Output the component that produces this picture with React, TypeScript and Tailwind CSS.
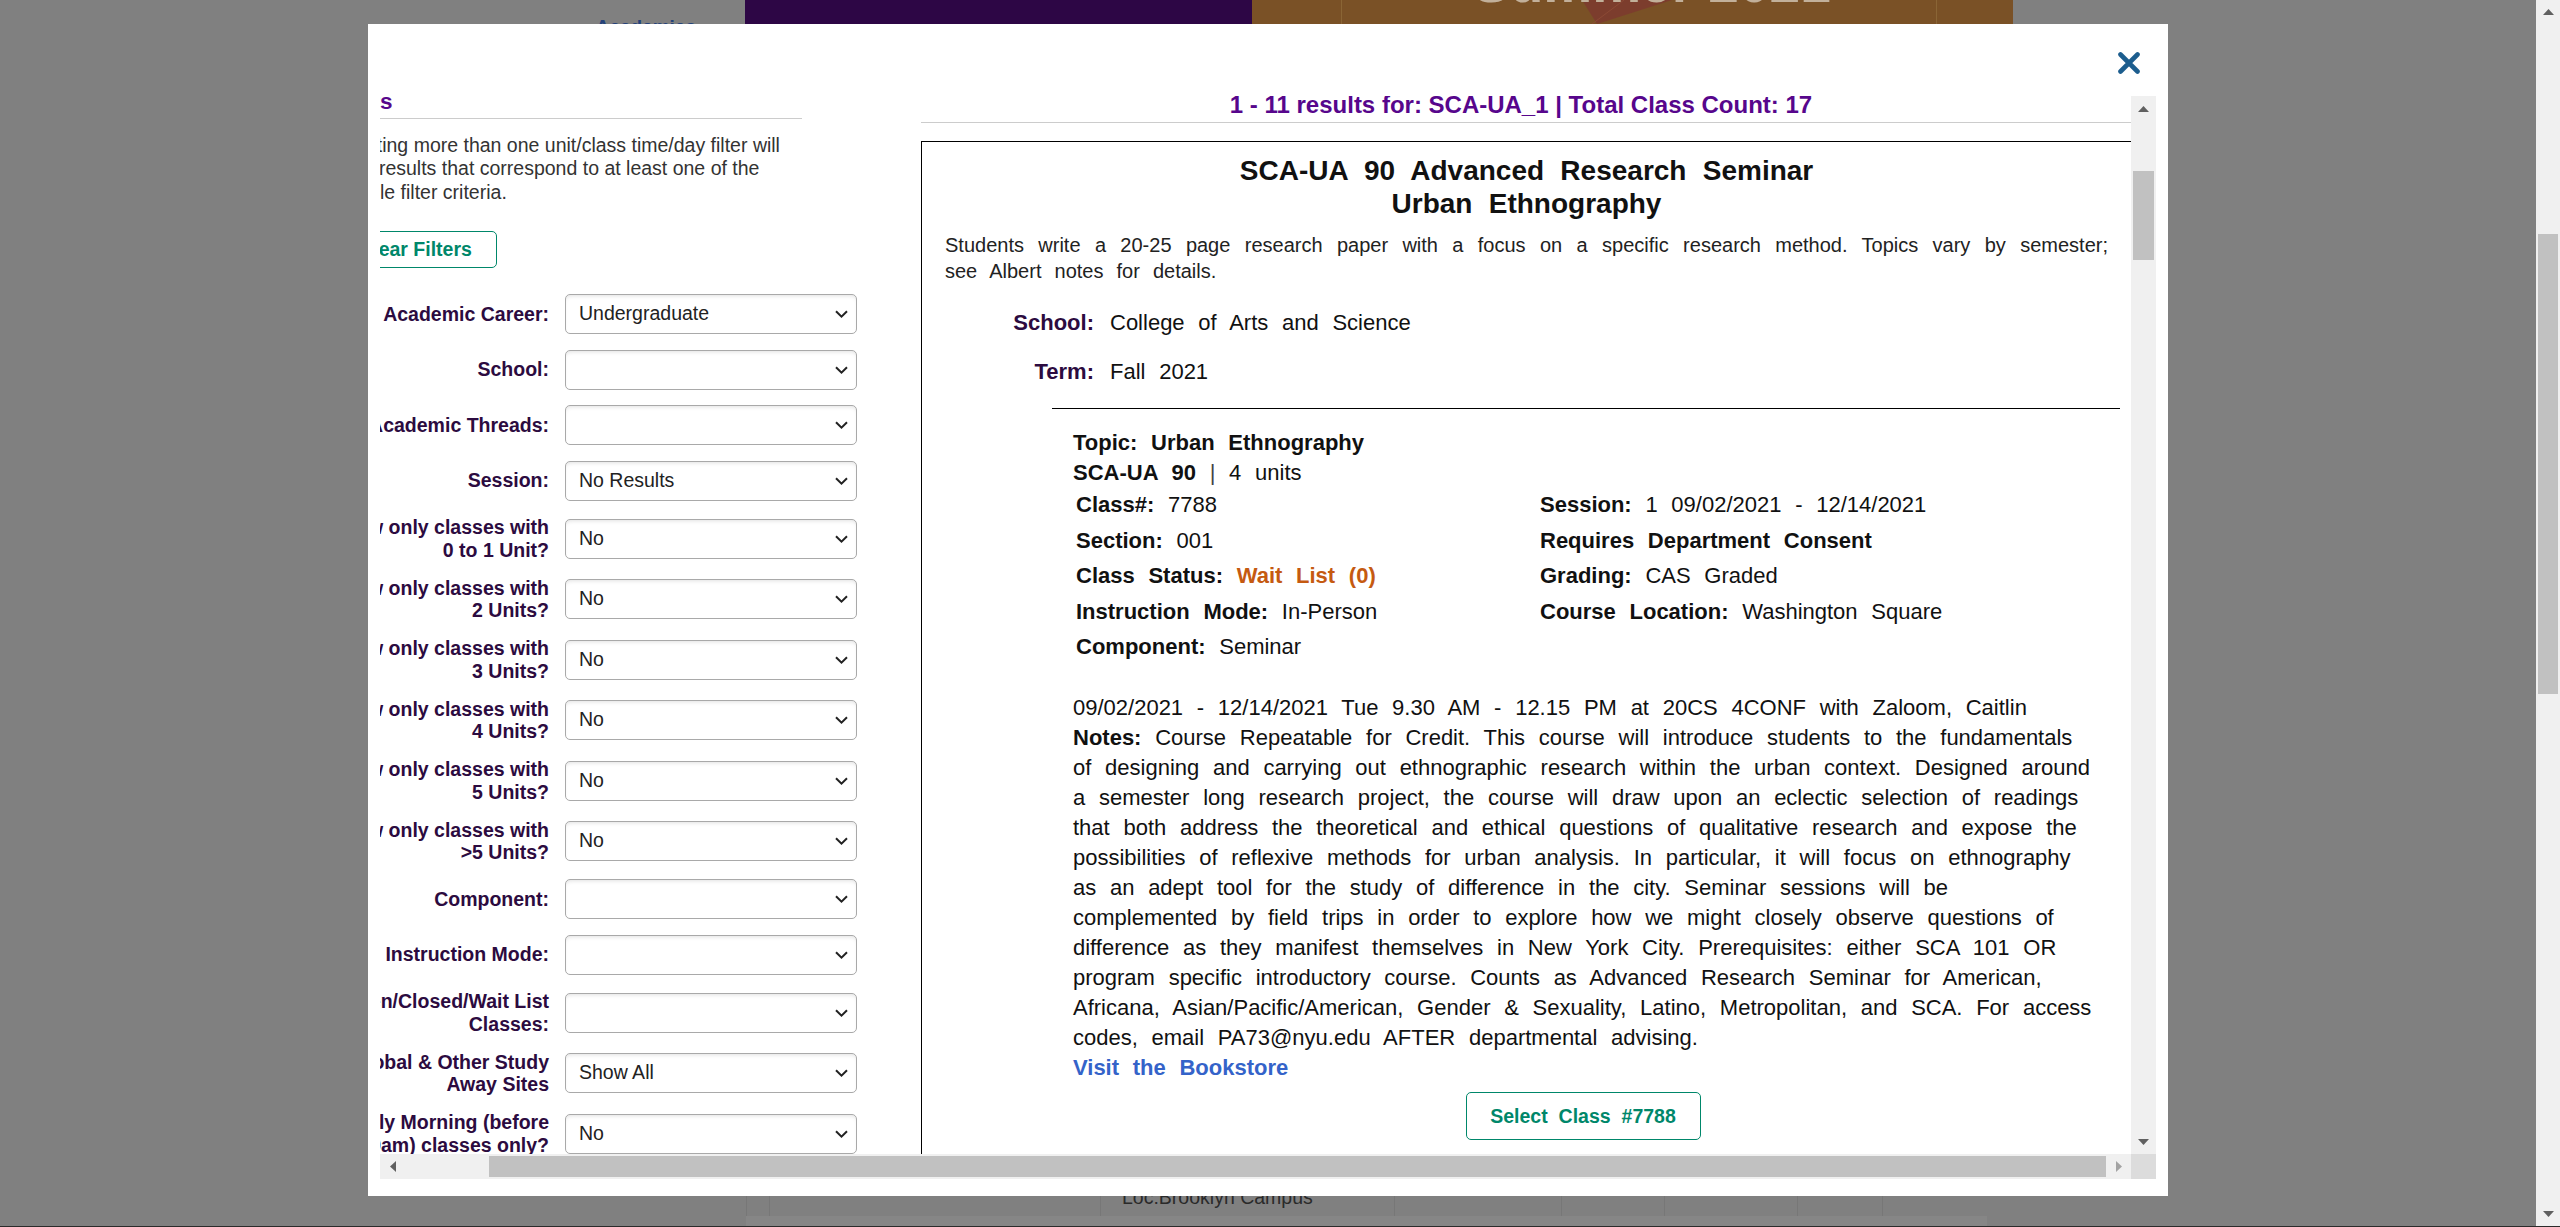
import React from 'react';

type Dir = 'up' | 'down' | 'left' | 'right';

const Arrow = ({ dir, color = '#606060' }: { dir: Dir; color?: string }) => {
  const vertical = dir === 'up' || dir === 'down';
  const points = {
    up: '0,6 5.5,0 11,6',
    down: '0,0 11,0 5.5,6',
    left: '6,0 6,11 0,5.5',
    right: '0,0 0,11 6,5.5',
  }[dir];
  return (
    <svg width={vertical ? 11 : 6} height={vertical ? 6 : 11} viewBox={vertical ? '0 0 11 6' : '0 0 6 11'}>
      <polygon points={points} fill={color} />
    </svg>
  );
};

const Chevron = () => (
  <svg width="13" height="8" viewBox="0 0 13 8" fill="none">
    <path d="M1 1.2 L6.5 6.6 L12 1.2" stroke="#222" strokeWidth="2" />
  </svg>
);

const Select = ({ value }: { value: string }) => (
  <div className="flex h-[40px] w-[292px] shrink-0 items-center justify-between rounded-[5px] border border-[#a9a9a9] bg-white pl-[13px] pr-[8px] text-[19.5px] font-normal text-[#222] shadow-[inset_0_3px_4px_-2px_rgba(0,0,0,0.12)]">
    <span>{value}</span>
    <Chevron />
  </div>
);

const filters: { label: string[]; value: string }[] = [
  { label: ['Academic Career:'], value: 'Undergraduate' },
  { label: ['School:'], value: '' },
  { label: ['Academic Threads:'], value: '' },
  { label: ['Session:'], value: 'No Results' },
  { label: ['Show only classes with', '0 to 1 Unit?'], value: 'No' },
  { label: ['Show only classes with', '2 Units?'], value: 'No' },
  { label: ['Show only classes with', '3 Units?'], value: 'No' },
  { label: ['Show only classes with', '4 Units?'], value: 'No' },
  { label: ['Show only classes with', '5 Units?'], value: 'No' },
  { label: ['Show only classes with', '>5 Units?'], value: 'No' },
  { label: ['Component:'], value: '' },
  { label: ['Instruction Mode:'], value: '' },
  { label: ['Open/Closed/Wait List', 'Classes:'], value: '' },
  { label: ['Global & Other Study', 'Away Sites'], value: 'Show All' },
  { label: ['Early Morning (before', '10am) classes only?'], value: 'No' },
];

const FilterPanel = () => (
  <div className="-mt-[5.5px] flex w-[526px] shrink-0 flex-col">
    <div className="mr-[55px] border-b border-[#cccccc] pb-[5px]">
      <h2 className="-ml-[6px] text-[22.5px] font-bold leading-[22px] text-[#57068c]">Filters</h2>
    </div>
    <p className="-ml-[3px] mt-[15px] whitespace-nowrap text-[19.5px] leading-[23.5px] text-[#333]">
      Selecting more than one unit/class time/day filter will
      <br />
      show results that correspond to at least one of the
      <br />
      multiple filter criteria.
    </p>
    <button className="ml-[3px] mt-[27px] h-[37px] w-[163px] rounded-[5px] border border-[#00876a] text-[19.5px] font-bold text-[#00876a]">
      Clear Filters
    </button>
    <div className="mt-[26px] flex flex-col gap-[15.5px]">
      {filters.map((f) => (
        <div key={f.label.join(' ')} className="flex items-center gap-[16px]">
          <div className="w-[218px] shrink-0 whitespace-nowrap text-right text-[19.5px] font-bold leading-[22.5px] text-[#2c0b40]">
            {f.label.map((l) => (
              <div key={l}>{l}</div>
            ))}
          </div>
          <Select value={f.value} />
        </div>
      ))}
    </div>
  </div>
);

const notes: { text: string; bold?: string }[] = [
  { text: '09/02/2021 - 12/14/2021 Tue 9.30 AM - 12.15 PM at 20CS 4CONF with Zaloom, Caitlin' },
  { bold: 'Notes:', text: ' Course Repeatable for Credit. This course will introduce students to the fundamentals' },
  { text: 'of designing and carrying out ethnographic research within the urban context. Designed around' },
  { text: 'a semester long research project, the course will draw upon an eclectic selection of readings' },
  { text: 'that both address the theoretical and ethical questions of qualitative research and expose the' },
  { text: 'possibilities of reflexive methods for urban analysis. In particular, it will focus on ethnography' },
  { text: 'as an adept tool for the study of difference in the city. Seminar sessions will be' },
  { text: 'complemented by field trips in order to explore how we might closely observe questions of' },
  { text: 'difference as they manifest themselves in New York City. Prerequisites: either SCA 101 OR' },
  { text: 'program specific introductory course. Counts as Advanced Research Seminar for American,' },
  { text: 'Africana, Asian/Pacific/American, Gender & Sexuality, Latino, Metropolitan, and SCA. For access' },
  { text: 'codes, email PA73@nyu.edu AFTER departmental advising.' },
];

const ResultCard = () => (
  <div className="mt-[18.5px] w-[1213px] border border-black pl-[23px] pr-[25px] pt-[12px] pb-[40px] text-[#111]">
    <h3 className="text-center text-[28px] font-bold leading-[33px] [word-spacing:8.5px]">
      SCA-UA 90 Advanced Research Seminar
      <br />
      Urban Ethnography
    </h3>
    <div className="mt-[11.5px] whitespace-nowrap text-[20px] leading-[26px] text-[#222] [word-spacing:7.5px]">
      <div className="text-justify [text-align-last:justify]">
        Students write a 20-25 page research paper with a focus on a specific research method. Topics vary by semester;
      </div>
      <div>see Albert notes for details.</div>
    </div>
    <div className="mt-[24.5px] text-[22px] leading-[30px] [word-spacing:7.6px]">
      <div className="flex">
        <span className="w-[149px] shrink-0 text-right font-bold text-[#2c0b40]">School:</span>
        <span className="ml-[16px]">College of Arts and Science</span>
      </div>
      <div className="mt-[19px] flex">
        <span className="w-[149px] shrink-0 text-right font-bold text-[#2c0b40]">Term:</span>
        <span className="ml-[16px]">Fall 2021</span>
      </div>
    </div>
    <div className="-mr-[12px] ml-[107px] mt-[21px] border-t border-black pl-[21px] pr-[27px] pt-[19px] text-[22px] leading-[30px] [word-spacing:7.6px]">
      <div className="font-bold">Topic: Urban Ethnography</div>
      <div>
        <span className="font-bold">SCA-UA 90</span> <span className="text-[#444]">|</span> 4 units
      </div>
      <div className="mt-[2px] grid grid-cols-[464px_1fr] gap-y-[5.5px] pl-[3px]">
        <div><b>Class#:</b> 7788</div>
        <div><b>Session:</b> 1 09/02/2021 - 12/14/2021</div>
        <div><b>Section:</b> 001</div>
        <div className="font-bold">Requires Department Consent</div>
        <div><b>Class Status:</b> <b className="text-[#c55a11]">Wait List (0)</b></div>
        <div><b>Grading:</b> CAS Graded</div>
        <div><b>Instruction Mode:</b> In-Person</div>
        <div><b>Course Location:</b> Washington Square</div>
        <div><b>Component:</b> Seminar</div>
      </div>
      <div className="mt-[31px] whitespace-nowrap">
        {notes.map((n) => (
          <div key={n.text}>
            {n.bold && <b>{n.bold}</b>}
            {n.text}
          </div>
        ))}
        <a className="font-bold text-[#3463c9]">Visit the Bookstore</a>
      </div>
      <div className="mt-[9px] flex justify-center">
        <button className="h-[48px] w-[235px] rounded-[5px] border border-[#00876a] text-[19.5px] font-bold text-[#00876a] [word-spacing:5.5px]">
          Select Class #7788
        </button>
      </div>
    </div>
  </div>
);

const ResultsPanel = () => (
  <div className="-mt-[5.5px] ml-[64px] w-[1213px] shrink-0">
    <div className="w-[1210px] border-b border-[#cccccc] pb-[3px] pr-[10px] text-center text-[24px] font-bold leading-[28px] text-[#57068c]">
      1 - 11 results for: SCA-UA_1 | Total Class Count: 17
    </div>
    <ResultCard />
  </div>
);

const Modal = () => (
  <div className="absolute left-[368px] top-[24px] h-[1172px] w-[1800px] bg-white">
    <div className="flex h-[72px] items-start justify-end pr-[27px] pt-[28px]">
      <svg width="24" height="22" viewBox="0 0 24 22">
        <path d="M3.5 2.5 L20.5 19.5 M20.5 2.5 L3.5 19.5" stroke="#1c5d8e" strokeWidth="4.6" strokeLinecap="round" />
      </svg>
    </div>
    <div className="ml-[12px] grid h-[1083px] w-[1776px] grid-cols-[1751px_25px] grid-rows-[1058px_25px]">
      <div className="overflow-hidden">
        <div className="-ml-[49px] flex items-start">
          <FilterPanel />
          <ResultsPanel />
        </div>
      </div>
      <div className="flex flex-col bg-[#f0f0f0]">
        <div className="flex h-[25px] items-center justify-center pt-[1px]">
          <Arrow dir="up" />
        </div>
        <div className="mx-[2px] mt-[50px] h-[89px] bg-[#c1c1c1]" />
        <div className="flex-1" />
        <div className="flex h-[25px] items-center justify-center">
          <Arrow dir="down" />
        </div>
      </div>
      <div className="flex bg-[#f0f0f0]">
        <div className="flex w-[25px] items-center justify-center">
          <Arrow dir="left" />
        </div>
        <div className="ml-[84px] my-[2px] w-[1617px] bg-[#c1c1c1]" />
        <div className="flex w-[25px] items-center justify-center">
          <Arrow dir="right" color="#a3a3a3" />
        </div>
      </div>
      <div className="bg-[#dcdcdc]" />
    </div>
  </div>
);

const PageBehind = () => (
  <>
    <div className="flex h-[24px] shrink-0">
      <div className="flex w-[745px] items-end justify-end pr-[49px]">
        <span className="translate-y-[17px] text-[19px] font-bold text-[#24427a]">Academics</span>
      </div>
      <div className="w-[507px] bg-[#2d0645]" />
      <div className="relative flex w-[761px] overflow-hidden bg-[#7a5126]">
        <svg className="absolute inset-0" width="761" height="24" viewBox="0 0 761 24">
          <polygon points="330,0 420,0 345,24" fill="#7d3530" opacity="0.7" />
          <line x1="372" y1="0" x2="340" y2="24" stroke="#8c4a35" strokeWidth="1" />
        </svg>
        <div className="relative ml-[89px] w-px bg-[#8a6535]" />
        <div className="relative flex-1 overflow-hidden">
          <span className="absolute left-[131px] -top-[58px] text-[55px] font-bold text-[#c2b09a]">Summer 2021</span>
        </div>
        <div className="relative mr-[76px] w-px bg-[#8a6535]" />
      </div>
    </div>
    <div className="flex-1" />
    <div className="flex h-[30px] shrink-0">
      <div className="w-[746px]" />
      <div className="flex w-[1241px] flex-col">
        <div className="flex h-[20px] border-l border-[#777]">
          <div className="w-[23px] border-r border-[#777]" />
          <div className="w-[331px] border-r border-[#777]" />
          <div className="w-[294px] overflow-hidden border-r border-[#777] pl-[21px]">
            <span className="block -mt-[13px] text-[19.5px] text-[#2a2a2a]">Loc:Brooklyn Campus</span>
          </div>
          <div className="w-[167px] border-r border-[#777]" />
          <div className="w-[103px] border-r border-[#777]" />
          <div className="w-[133px] border-r border-[#777]" />
          <div className="w-[85px] border-r border-[#777]" />
          <div className="flex-1" />
        </div>
        <div className="flex-1 bg-[#868686]" />
      </div>
    </div>
  </>
);

const PageScrollbar = () => (
  <div className="flex w-[24px] shrink-0 flex-col bg-[#f0f0f0]">
    <div className="flex h-[24px] items-center justify-center">
      <Arrow dir="up" />
    </div>
    <div className="mx-[2px] mt-[210px] h-[460px] bg-[#c1c1c1]" />
    <div className="flex-1" />
    <div className="flex h-[24px] items-center justify-center">
      <Arrow dir="down" />
    </div>
  </div>
);

export default function App() {
  return (
    <div className="flex h-[1227px] w-[2560px] flex-col overflow-hidden bg-[#808080] font-['Liberation_Sans',Arial,sans-serif]">
      <div className="flex h-[1226px]">
        <div className="relative flex flex-1 flex-col">
          <PageBehind />
          <Modal />
        </div>
        <PageScrollbar />
      </div>
      <div className="h-px bg-[#2b2b2b]" />
    </div>
  );
}
